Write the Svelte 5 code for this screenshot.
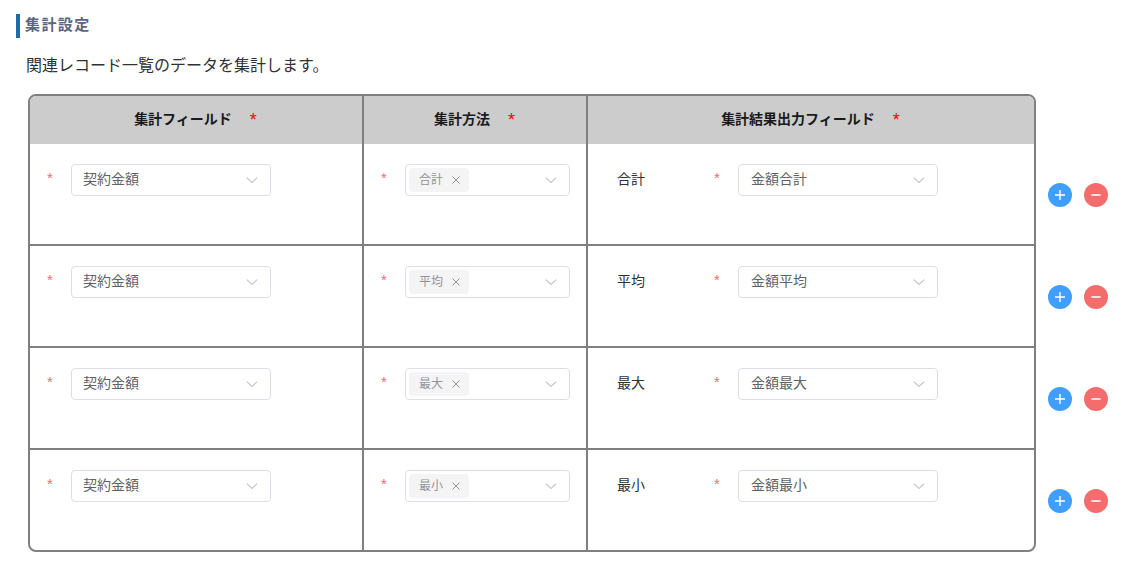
<script lang="ts">
  const rows = [
    { method: "合計", output: "金額合計" },
    { method: "平均", output: "金額平均" },
    { method: "最大", output: "金額最大" },
    { method: "最小", output: "金額最小" },
  ];
</script>

{#snippet chevron()}
  <svg class="chevron" width="12" height="12" viewBox="0 0 12 12" aria-hidden="true">
    <path d="M0.8 3.6 L6 8.4 L11.2 3.6" fill="none" stroke="#c0c4cc" stroke-width="1.1" />
  </svg>
{/snippet}

<div class="page">
  <h2 class="title">集計設定</h2>
  <p class="desc">関連レコード一覧のデータを集計します。</p>

  <div class="body">
    <div class="table">
      <div class="row head">
        <div class="cell c1">集計フィールド<span class="req">*</span></div>
        <div class="cell c2">集計方法<span class="req">*</span></div>
        <div class="cell c3">集計結果出力フィールド<span class="req">*</span></div>
      </div>
      {#each rows as row}
        <div class="row item">
          <div class="cell c1">
            <span class="star">*</span>
            <div class="select field">
              <span class="value">契約金額</span>
              {@render chevron()}
            </div>
          </div>
          <div class="cell c2">
            <span class="star">*</span>
            <div class="select method">
              <span class="tag">{row.method}
                <svg class="close" width="8" height="8" viewBox="0 0 8 8" aria-hidden="true">
                  <path d="M0.5 0.5 L7.5 7.5 M7.5 0.5 L0.5 7.5" stroke="#909399" stroke-width="1" />
                </svg>
              </span>
              {@render chevron()}
            </div>
          </div>
          <div class="cell c3">
            <span class="label">{row.method}</span>
            <span class="star">*</span>
            <div class="select field output">
              <span class="value">{row.output}</span>
              {@render chevron()}
            </div>
          </div>
        </div>
      {/each}
    </div>

    <div class="side">
      {#each rows as row}
        <div class="actions">
          <button class="round add" aria-label="{row.method}を追加">
            <svg width="12" height="12" viewBox="0 0 12 12"><path d="M6 1 V11 M1 6 H11" stroke="#fff" stroke-width="1.4" /></svg>
          </button>
          <button class="round remove" aria-label="{row.method}を削除">
            <svg width="12" height="12" viewBox="0 0 12 12"><path d="M1.5 6 H10.5" stroke="#fff" stroke-width="1.6" /></svg>
          </button>
        </div>
      {/each}
    </div>
  </div>
</div>

<style>
  :global(body) {
    background: #fff;
    font-family: "Noto Sans CJK JP", "Noto Sans", sans-serif;
    color: #303133;
  }
  .page {
    padding: 14px 16px 0;
    height: 554px;
    overflow: hidden;
  }
  .title {
    margin: 0;
    height: 24px;
    padding-left: 5px;
    border-left: 4px solid #1a6caa;
    color: #5b6680;
    font-size: 15px;
    font-weight: 700;
    letter-spacing: 1.4px;
    line-height: 20px;
  }
  .desc {
    margin: 14px 0 0 10px;
    height: 25px;
    color: #303133;
    font-size: 16px;
    line-height: 24px;
  }
  .body {
    display: flex;
    margin: 17px 0 0 12px;
  }
  .table {
    width: 1008px;
    box-sizing: border-box;
    border: 2px solid #808080;
    border-radius: 8px;
    overflow: hidden;
  }
  .row {
    display: grid;
    grid-template-columns: 332px 224px 448px;
  }
  .head {
    height: 48px;
    background: #cccccc;
  }
  .head .cell {
    display: flex;
    justify-content: center;
    align-items: center;
    color: #1a1a1a;
    font-size: 14px;
    font-weight: 700;
    padding: 0 1px 4px 0;
    box-sizing: border-box;
  }
  .req {
    margin: 5px 0 0 18px;
    color: #ff0000;
    font-family: "Liberation Sans", sans-serif;
    font-size: 18px;
    font-weight: 400;
  }
  .item {
    height: 102px;
    box-sizing: border-box;
    border-bottom: 2px solid #808080;
  }
  .item:last-child {
    height: 100px;
    border-bottom: none;
  }
  .cell {
    min-width: 0;
  }
  .c2,
  .c3 {
    border-left: 2px solid #808080;
  }
  .item .cell {
    display: flex;
    align-items: flex-start;
    padding-top: 20px;
    box-sizing: border-box;
  }
  .item .c1,
  .item .c2 {
    padding-left: 17px;
  }
  .item .c3 {
    padding-left: 29px;
  }
  .star {
    width: 24px;
    color: #f56c6c;
    font-family: "Liberation Sans", sans-serif;
    font-size: 15px;
    line-height: 28px;
  }
  .label {
    width: 97px;
    color: #303133;
    font-size: 14px;
    line-height: 28px;
  }
  .select {
    display: flex;
    align-items: center;
    justify-content: space-between;
    height: 32px;
    box-sizing: border-box;
    border: 1px solid #dcdfe6;
    border-radius: 4px;
    background: #fff;
    padding-right: 12px;
  }
  .field {
    width: 200px;
    padding-left: 11px;
  }
  .output {
    padding-left: 12px;
  }
  .method {
    width: 165px;
    padding-left: 3px;
  }
  .value {
    color: #606266;
    font-size: 14px;
    line-height: 20px;
    padding-bottom: 5px;
  }
  .tag {
    display: inline-flex;
    align-items: center;
    gap: 9px;
    width: 60px;
    height: 24px;
    box-sizing: border-box;
    padding: 0 0 3px 10px;
    border-radius: 4px;
    background: #f4f4f5;
    color: #909399;
    font-size: 12px;
  }
  .close {
    margin-top: 3px;
  }
  .chevron {
    flex: none;
  }
  .side {
    padding-top: 50px;
    margin-left: 12px;
  }
  .actions {
    display: flex;
    align-items: center;
    gap: 12px;
    height: 102px;
  }
  .round {
    display: flex;
    align-items: center;
    justify-content: center;
    width: 24px;
    height: 24px;
    padding: 0;
    border: none;
    border-radius: 50%;
    cursor: pointer;
  }
  .add {
    background: #409eff;
  }
  .remove {
    background: #f56c6c;
  }
</style>
